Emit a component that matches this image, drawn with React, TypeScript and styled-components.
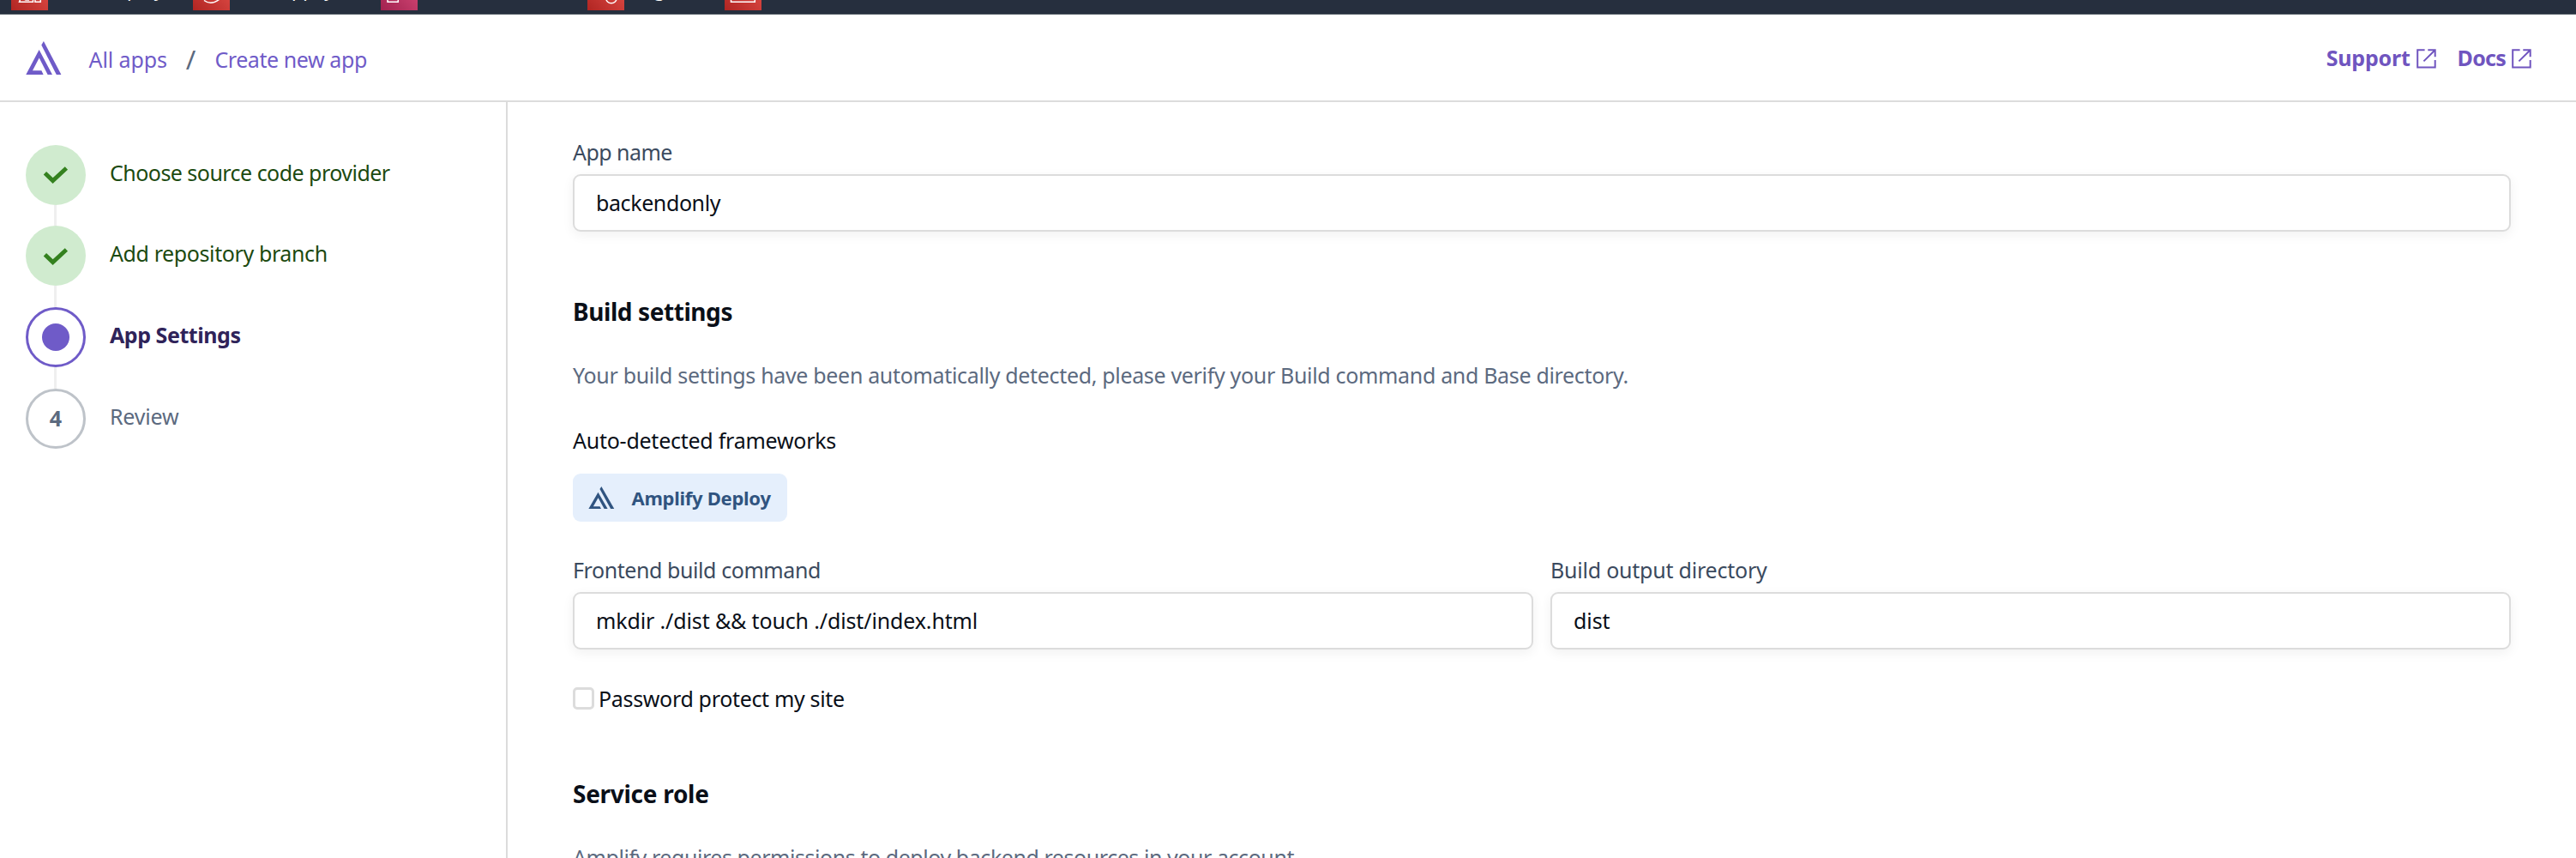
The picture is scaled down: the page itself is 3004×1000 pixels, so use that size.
import React from "react";
import styled, { createGlobalStyle, css } from "styled-components";

const color = {
  purple: "#6f5bc8",
  link: "#7055bf",
  ink: "#0a0f18",
  label: "#3b4a5e",
  muted: "#5c6a7f",
  border: "#dcdcdc",
};

const GlobalStyle = createGlobalStyle`
  *, *::before, *::after { box-sizing: border-box; }
  body {
    margin: 0;
    background: #fff;
    color: ${color.ink};
    font-family: "Noto Sans", "Open Sans", sans-serif;
    font-size: 25px;
    line-height: 36px;
    overflow: hidden;
  }
`;

type Tracked = { $track?: number };
const tracking = css<Tracked>`
  letter-spacing: ${(p) => p.$track ?? 0}px;
  white-space: nowrap;
`;

const Page = styled.div`
  display: flex;
  flex-direction: column;
  height: 1000px;
  overflow: hidden;
`;

/* Favourites bar */
const ServiceBar = styled.nav`
  display: flex;
  flex: none;
  align-items: flex-end;
  height: 17px;
  padding-left: 13px;
  background: #262f3e;
  border-bottom: 1px solid #4d565f;
  overflow: hidden;
`;

const Service = styled.div<{ $width: number }>`
  display: flex;
  flex: none;
  align-items: flex-end;
  gap: 8px;
  width: ${(p) => p.$width}px;
`;

const Tile = styled.span<{ $pink?: boolean }>`
  display: block;
  flex: none;
  width: 43px;
  height: 44px;
  margin-bottom: 4px;
  background: ${(p) =>
    p.$pink
      ? "linear-gradient(45deg, #a1224f, #e0507f)"
      : "linear-gradient(45deg, #b02522, #ea554f)"};
`;

const TileArt = styled.svg`
  display: block;
  width: 43px;
  height: 44px;
  fill: none;
  stroke: #fff;
  stroke-width: 1.5;
`;

const ServiceName = styled.span`
  margin-bottom: 17px;
  color: #fff;
  font-size: 21.5px;
  line-height: 22px;
  white-space: nowrap;
`;

/* Header */
const Header = styled.header`
  display: flex;
  flex: none;
  align-items: center;
  justify-content: space-between;
  height: 102px;
  padding: 0 52px 0 30px;
  border-bottom: 2px solid ${color.border};
`;

const Brand = styled.div`
  display: flex;
  align-items: center;
  gap: 32px;
`;

const Crumbs = styled.nav`
  display: flex;
  align-items: center;
  gap: 22px;
  padding-top: 3px;
`;

const Crumb = styled.a<Tracked>`
  color: ${color.purple};
  ${tracking}
`;

const Slash = styled.span`
  color: ${color.muted};
  font-size: 31px;
`;

const HeaderLinks = styled.div`
  display: flex;
  gap: 25px;
`;

const HeaderLink = styled.a<Tracked>`
  display: flex;
  align-items: center;
  gap: 7px;
  color: ${color.link};
  font-weight: 700;
  ${tracking}
`;

const ExternalSvg = styled.svg`
  display: block;
  width: 23px;
  height: 23px;
  margin-top: 3px;
  fill: none;
  stroke: currentColor;
  stroke-width: 2;
`;

const LogoSvg = styled.svg<{ $width: number; $height: number; $drop?: number }>`
  display: block;
  flex: none;
  width: ${(p) => p.$width}px;
  height: ${(p) => p.$height}px;
  margin-top: ${(p) => p.$drop ?? 0}px;
  fill: currentColor;
`;

const BrandMark = styled.span`
  color: ${color.purple};
`;

/* Body */
const Body = styled.div`
  display: flex;
  flex: 1;
  min-height: 0;
`;

const Sidebar = styled.aside`
  flex: none;
  width: 592px;
  padding: 49.7px 0 0 30px;
  border-right: 2px solid ${color.border};
`;

const Steps = styled.ol`
  display: flex;
  flex-direction: column;
  margin: 0;
  padding: 0;
  list-style: none;
`;

type StepState = "done" | "current" | "todo";

const Step = styled.li`
  display: grid;
  grid-template-columns: 70px auto;
  column-gap: 28px;
  align-items: center;
`;

const Connector = styled.span`
  width: 3px;
  height: 24.8px;
  margin-left: 33px;
  background: #efefef;
`;

const StepCircle = styled.span<{ $state: StepState }>`
  display: flex;
  align-items: center;
  justify-content: center;
  width: 70px;
  height: 70px;
  border-radius: 50%;
  font-size: 25px;
  font-weight: 700;
  padding-bottom: 2px;
  color: ${color.muted};
  ${(p) =>
    p.$state === "done"
      ? "background: #d0ebcf;"
      : p.$state === "current"
        ? `border: 3px solid ${color.purple}; padding: 0;`
        : "border: 3px solid #bec3c9;"}
`;

const Dot = styled.span`
  width: 32px;
  height: 32px;
  border-radius: 50%;
  background: ${color.purple};
`;

const CheckSvg = styled.svg`
  display: block;
  width: 30px;
  height: 20px;
  margin-top: 3px;
  fill: none;
  stroke: #34811f;
  stroke-width: 4.8;
`;

const StepLabel = styled.span<Tracked & { $state: StepState }>`
  padding-bottom: 6px;
  font-weight: ${(p) => (p.$state === "current" ? 700 : 400)};
  color: ${(p) =>
    p.$state === "done" ? "#1c4a10" : p.$state === "current" ? "#2f2359" : color.muted};
  ${tracking}
`;

const Main = styled.main`
  flex: 1;
  min-width: 0;
  padding: 40px 76px 0;
`;

const Field = styled.div`
  flex: 1;
  min-width: 0;
`;

const FieldRow = styled.div`
  display: flex;
  gap: 20px;
  margin-top: 38px;
`;

const Label = styled.label<Tracked>`
  display: block;
  margin-bottom: 8px;
  color: ${color.label};
  ${tracking}
`;

const Input = styled.input<Tracked>`
  display: block;
  width: 100%;
  height: 67px;
  padding: 0 24px 1px 25px;
  border: 2px solid ${color.border};
  border-radius: 9px;
  outline: none;
  background: #fff;
  box-shadow: 0 4px 14px rgba(0, 0, 0, 0.06);
  color: ${color.ink};
  font: inherit;
  ${tracking}
`;

const Heading = styled.h2<Tracked>`
  margin: 74px 0 37px;
  font-size: 28px;
  font-weight: 700;
  line-height: 38px;
  ${tracking}
`;

const Description = styled.p<Tracked>`
  margin: 0;
  color: ${color.muted};
  ${tracking}
`;

const Subheading = styled.h3<Tracked>`
  margin: 40px 0 21px;
  font-size: 25px;
  font-weight: 400;
  ${tracking}
`;

const Badge = styled.span<Tracked>`
  display: flex;
  align-items: center;
  gap: 20px;
  width: 250px;
  height: 56px;
  padding-left: 18px;
  border-radius: 9px;
  background: #e5effc;
  color: #305480;
  font-size: 22px;
  font-weight: 700;
  ${tracking}
`;

const CheckRow = styled.label<Tracked>`
  display: flex;
  align-items: center;
  gap: 5px;
  margin-top: 39px;
  ${tracking}
`;

const Checkbox = styled.span`
  width: 25px;
  height: 26px;
  border: 3px solid ${color.border};
  border-radius: 5px;
`;

const Logo = (p: { width: number; height: number; drop?: number }) => (
  <LogoSvg
    $width={p.width}
    $height={p.height}
    $drop={p.drop}
    viewBox="30 48 41.5 39"
    preserveAspectRatio="none"
    aria-hidden
  >
    <path d="M45.6 58L30.3 87H50.6L48.4 82.3H38L45.7 67.6L55.6 87H61Z" />
    <path d="M50.9 48L48.3 52.6L65.8 87H71.4Z" />
  </LogoSvg>
);

const ExternalIcon = () => (
  <ExternalSvg viewBox="0 0 23 23" aria-hidden>
    <path d="M9.6 1.2H1.2V21.4H21.7V13" />
    <path d="M13.3 1.2H21.7V9.2M8.4 14.4L21.2 1.8" />
  </ExternalSvg>
);

const CheckIcon = () => (
  <CheckSvg viewBox="0 0 30 20" aria-hidden>
    <path d="M2.4 7.8L11.6 16.6L27.4 2" />
  </CheckSvg>
);

const services: { width: number; art: string; name?: string; pink?: boolean }[] = [
  { width: 212, name: "AWS Amplify", art: "M11.5 -3L9.5 2.2H25.5V-2M28 -2V2.2H34.3V-2M15 -1L17 0H21" },
  { width: 219, name: "AWS AppSync", art: "M13 0.5Q21 6.5 30.5 -0.5" },
  { width: 241, pink: true, art: "M8 -8V2.2H20.3V-8" },
  { width: 160, name: "Cognito", art: "M21.6 -2.5A6.3 6.3 0 1 0 34.2 -2.5A6.3 6.3 0 1 0 21.6 -2.5" },
  { width: 160, art: "M7.5 -12V2.2H35.3V-12" },
];

const steps: { label: string; state: StepState; track: number }[] = [
  { label: "Choose source code provider", state: "done", track: -0.53 },
  { label: "Add repository branch", state: "done", track: -0.39 },
  { label: "App Settings", state: "current", track: -0.45 },
  { label: "Review", state: "todo", track: -0.2 },
];

export default function App() {
  return (
    <Page>
      <GlobalStyle />
      <ServiceBar>
        {services.map((s, i) => (
          <Service key={i} $width={s.width}>
            <Tile $pink={s.pink}>
              <TileArt viewBox="0 -32 43 44" aria-hidden>
                <path d={s.art} />
              </TileArt>
            </Tile>
            {s.name && <ServiceName>{s.name}</ServiceName>}
          </Service>
        ))}
      </ServiceBar>

      <Header>
        <Brand>
          <BrandMark>
            <Logo width={41.5} height={39} drop={1} />
          </BrandMark>
          <Crumbs>
            <Crumb $track={-0.1}>All apps</Crumb>
            <Slash>/</Slash>
            <Crumb $track={-0.42}>Create new app</Crumb>
          </Crumbs>
        </Brand>
        <HeaderLinks>
          <HeaderLink $track={-0.2}>
            Support
            <ExternalIcon />
          </HeaderLink>
          <HeaderLink $track={-0.75}>
            Docs
            <ExternalIcon />
          </HeaderLink>
        </HeaderLinks>
      </Header>

      <Body>
        <Sidebar>
          <Steps>
            {steps.map((s, i) => (
              <React.Fragment key={s.label}>
                {i > 0 && <Connector />}
                <Step>
                  <StepCircle $state={s.state}>
                    {s.state === "done" ? <CheckIcon /> : s.state === "current" ? <Dot /> : i + 1}
                  </StepCircle>
                  <StepLabel $state={s.state} $track={s.track}>
                    {s.label}
                  </StepLabel>
                </Step>
              </React.Fragment>
            ))}
          </Steps>
        </Sidebar>

        <Main>
          <Field>
            <Label $track={-0.55}>App name</Label>
            <Input $track={-0.4} defaultValue="backendonly" />
          </Field>

          <Heading $track={-0.42}>Build settings</Heading>
          <Description $track={-0.33}>
            Your build settings have been automatically detected, please verify your Build command
            and Base directory.
          </Description>

          <Subheading $track={-0.25}>Auto-detected frameworks</Subheading>
          <Badge $track={-0.28}>
            <Logo width={30.5} height={26.3} />
            Amplify Deploy
          </Badge>

          <FieldRow>
            <Field>
              <Label $track={-0.42}>Frontend build command</Label>
              <Input $track={-0.14} defaultValue="mkdir ./dist && touch ./dist/index.html" />
            </Field>
            <Field>
              <Label $track={-0.22}>Build output directory</Label>
              <Input $track={-0.1} defaultValue="dist" />
            </Field>
          </FieldRow>

          <CheckRow $track={-0.33}>
            <Checkbox />
            Password protect my site
          </CheckRow>

          <Heading $track={-0.28}>Service role</Heading>
          <Description $track={-0.44}>
            Amplify requires permissions to deploy backend resources in your account.
          </Description>
        </Main>
      </Body>
    </Page>
  );
}
